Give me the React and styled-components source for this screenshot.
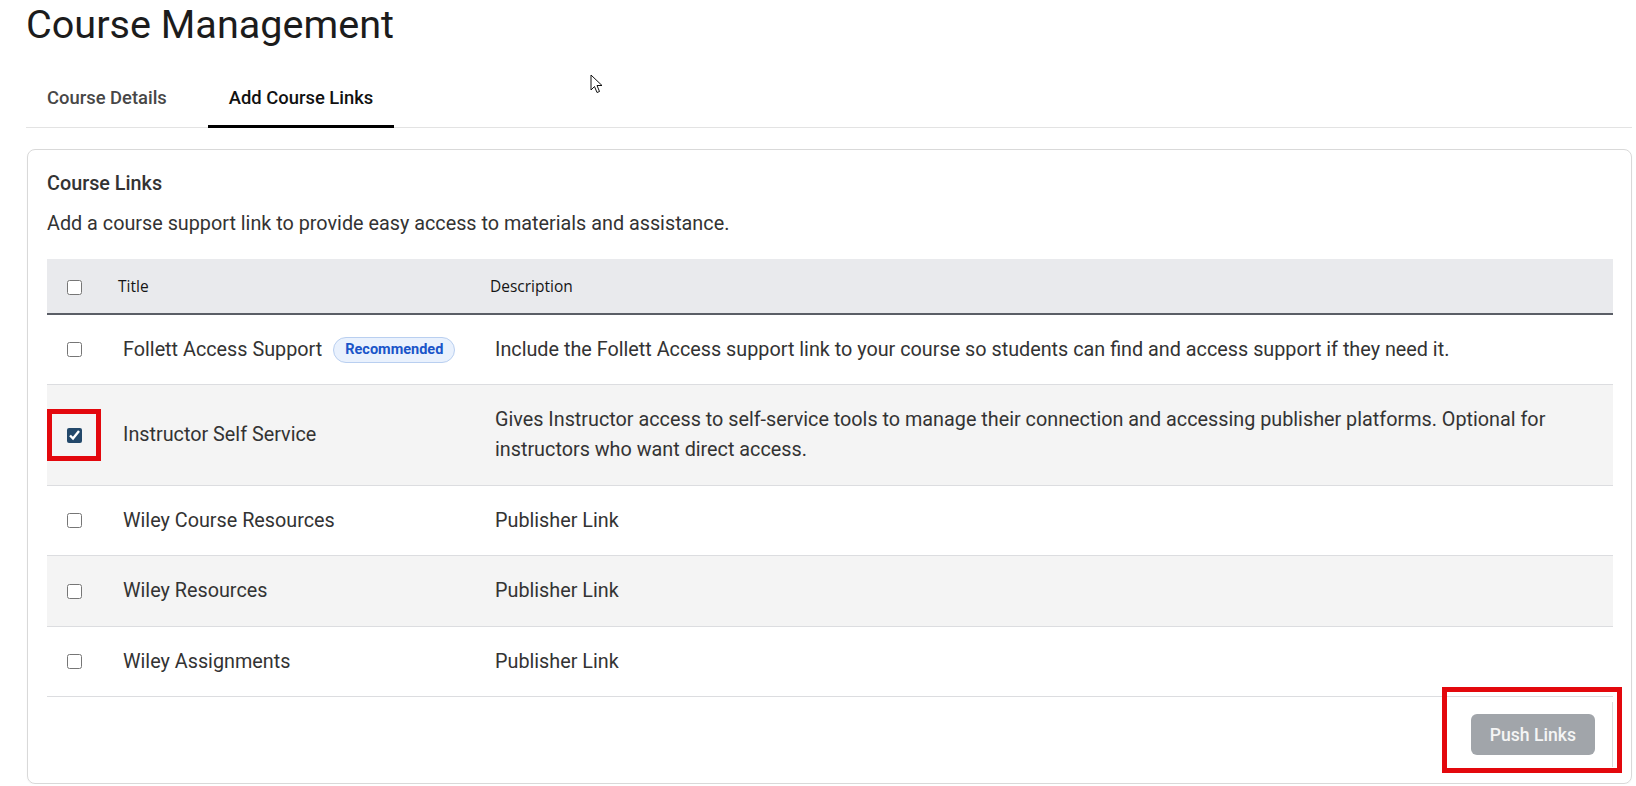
import styled, { createGlobalStyle } from "styled-components";
import { useState } from "react";

const GlobalStyle = createGlobalStyle`
  * { box-sizing: border-box; }
  body {
    margin: 0;
    background: #fff;
    font-family: Roboto, "Liberation Sans", Arial, sans-serif;
    color: #333;
  }
`;

const Page = styled.div`
  position: relative;
  padding: 1px 4px 0 26px;
`;

const PageTitle = styled.h1`
  margin: 0;
  font-size: 39.6px;
  line-height: 47.5px;
  font-weight: 400;
  color: #1c1c1c;
`;

const TabBar = styled.div`
  display: flex;
  gap: 20px;
  margin-top: 22px;
  border-bottom: 1px solid #e3e3e3;
`;

const Tab = styled.button`
  margin: 0 0 -1px;
  padding: 14px 21px;
  border: 0;
  border-bottom: 3px solid ${(p) => (p.$active ? "#000" : "transparent")};
  background: none;
  font-family: inherit;
  font-size: 18.4px;
  line-height: 26.4px;
  font-weight: 500;
  color: ${(p) => (p.$active ? "#111" : "#474747")};
  cursor: pointer;
`;

const Card = styled.section`
  margin: 21px 0 0 1px;
  padding: 19px 18px 16px 19px;
  border: 1px solid #d9d9d9;
  border-radius: 8px;
  box-shadow: 0 1px 2px rgba(0, 0, 0, 0.04);
`;

const CardTitle = styled.h2`
  margin: 0;
  font-size: 19.8px;
  line-height: 30px;
  font-weight: 500;
  color: #333;
`;

const CardText = styled.p`
  margin: 10px 0 0;
  font-size: 19.8px;
  line-height: 30px;
  color: #333;
`;

const Table = styled.table`
  width: 100%;
  margin-top: 20px;
  border-collapse: collapse;
  table-layout: fixed;
`;

const HeadCell = styled.th`
  height: 55px;
  padding: 0 17px;
  background: #e9eaed;
  border-bottom: 2px solid #5a5e66;
  text-align: ${(p) => (p.$center ? "center" : "left")};
  font-family: "Open Sans", "DejaVu Sans", sans-serif;
  font-size: 15.5px;
  font-weight: 500;
  color: #151515;
`;

const Row = styled.tr`
  background: ${(p) => (p.$shaded ? "#f4f4f4" : "#fff")};
  border-bottom: 1px solid #dcdde0;
`;

const Cell = styled.td`
  padding: ${(p) => (p.$box ? "0" : "19.75px 22px")};
  vertical-align: middle;
  text-align: ${(p) => (p.$box ? "center" : "left")};
  white-space: ${(p) => (p.$nowrap ? "nowrap" : "normal")};
  font-size: 19.8px;
  line-height: 30px;
  color: #333;
`;

const Check = styled.input.attrs({ type: "checkbox" })`
  width: 15px;
  height: 15px;
  margin: 0;
  vertical-align: middle;
  accent-color: #23486a;
  cursor: pointer;
`;

const BoxSlot = styled.div`
  display: flex;
  align-items: center;
  justify-content: center;
  width: 54px;
  height: 52px;
  border: 5px solid ${(p) => (p.$marked ? "#e3080d" : "transparent")};
`;

const Badge = styled.span`
  display: inline-flex;
  align-items: center;
  height: 26px;
  margin-left: 11px;
  padding: 0 11px;
  vertical-align: middle;
  border: 1px solid #b9cff0;
  border-radius: 13px;
  background: #e9f1fd;
  color: #1a55c9;
  font-size: 14.5px;
  font-weight: 700;
  line-height: 1;
`;

const Footer = styled.div`
  position: relative;
  display: flex;
  justify-content: flex-end;
  align-items: center;
  height: 65px;
  margin-top: 5px;
  padding-right: 17px;
  border-right: 1px solid #dcdcdc;
`;

const PushButton = styled.button`
  height: 41px;
  padding: 0 19px;
  border: 0;
  border-radius: 6px;
  background: #a1a5aa;
  color: #f5f5f5;
  font-family: inherit;
  font-size: 17.6px;
  font-weight: 500;
  cursor: not-allowed;
`;

const Marker = styled.div`
  position: absolute;
  top: -15px;
  right: -10px;
  width: 180px;
  height: 86px;
  border: 5px solid #e3080d;
  pointer-events: none;
`;

const Pointer = styled.svg`
  position: absolute;
  left: 590px;
  top: 74px;
  pointer-events: none;
`;

const links = [
  {
    title: "Follett Access Support",
    recommended: true,
    description:
      "Include the Follett Access support link to your course so students can find and access support if they need it.",
  },
  {
    title: "Instructor Self Service",
    description:
      "Gives Instructor access to self-service tools to manage their connection and accessing publisher platforms. Optional for instructors who want direct access.",
  },
  { title: "Wiley Course Resources", description: "Publisher Link" },
  { title: "Wiley Resources", description: "Publisher Link" },
  { title: "Wiley Assignments", description: "Publisher Link" },
];

export default function App() {
  const [tab, setTab] = useState("links");
  const [picked, setPicked] = useState([1]);

  const toggle = (i) =>
    setPicked((prev) =>
      prev.includes(i) ? prev.filter((x) => x !== i) : [...prev, i]
    );

  return (
    <>
      <GlobalStyle />
      <Page>
        <PageTitle>Course Management</PageTitle>
        <TabBar>
          <Tab $active={tab === "details"} onClick={() => setTab("details")}>
            Course Details
          </Tab>
          <Tab $active={tab === "links"} onClick={() => setTab("links")}>
            Add Course Links
          </Tab>
        </TabBar>

        <Card>
          <CardTitle>Course Links</CardTitle>
          <CardText>
            Add a course support link to provide easy access to materials and
            assistance.
          </CardText>

          <Table>
            <colgroup>
              <col style={{ width: 54 }} />
              <col style={{ width: 372 }} />
              <col />
            </colgroup>
            <thead>
              <tr>
                <HeadCell $center>
                  <Check
                    checked={picked.length === links.length}
                    onChange={() =>
                      setPicked(
                        picked.length === links.length ? [] : links.map((_, i) => i)
                      )
                    }
                  />
                </HeadCell>
                <HeadCell>Title</HeadCell>
                <HeadCell>Description</HeadCell>
              </tr>
            </thead>
            <tbody>
              {links.map((link, i) => (
                <Row key={link.title} $shaded={i % 2 === 1}>
                  <Cell $box>
                    <BoxSlot $marked={i === 1}>
                      <Check checked={picked.includes(i)} onChange={() => toggle(i)} />
                    </BoxSlot>
                  </Cell>
                  <Cell $nowrap>
                    {link.title}
                    {link.recommended && <Badge>Recommended</Badge>}
                  </Cell>
                  <Cell>{link.description}</Cell>
                </Row>
              ))}
            </tbody>
          </Table>

          <Footer>
            <PushButton disabled>Push Links</PushButton>
            <Marker />
          </Footer>
        </Card>

        <Pointer width="13" height="20" viewBox="0 0 13 20">
          <path
            d="M1 1 L1 16 L4.5 12.5 L7 18.5 L9.5 17.5 L7 11.5 L12 11.5 Z"
            fill="#fff"
            stroke="#111"
            strokeWidth="1"
            strokeLinejoin="round"
          />
        </Pointer>
      </Page>
    </>
  );
}
